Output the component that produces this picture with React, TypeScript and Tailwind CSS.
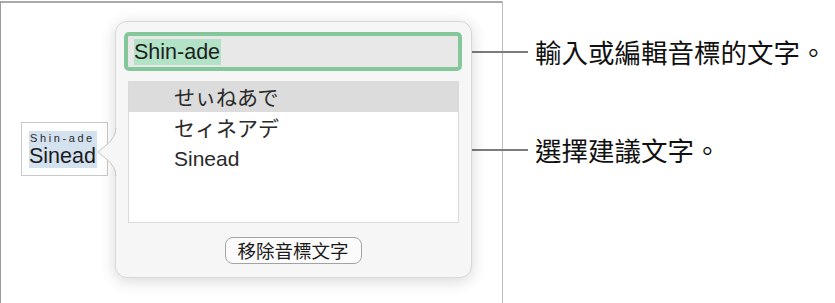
import React from "react";

const latin = { fontFamily: '"Liberation Sans", "Noto Sans CJK JP", sans-serif' };
const cjk = { fontFamily: '"Noto Sans CJK TC", "Liberation Sans", sans-serif' };
const jp = { fontFamily: '"Noto Sans CJK JP", "Liberation Sans", sans-serif' };

export default function App() {
  return (
    <div className="w-[835px] h-[303px] bg-white flex flex-row overflow-hidden">
      {/* Document frame */}
      <div className="w-[503px] shrink-0 mt-px h-[320px] border-t-2 border-l border-r border-t-[#a9a9a9] border-l-[#9a9a9a] border-r-[#bdbdbd] flex flex-row items-start pl-[20px]">
        {/* Ruby text box */}
        <div className="mt-[119px] w-[87px] h-[54px] border border-[#c9c9c9] bg-white pl-[7px] pt-[8px]">
          <div className="w-[68px] bg-[#d4e1ef] flex flex-col" style={latin}>
            <span className="text-[11px] leading-[12px] tracking-[2.6px] text-[#2a2a2a] pl-[1px] pt-px">Shin-ade</span>
            <span className="text-[21.5px] leading-[24px] text-[#1c1c1c]">Sinead</span>
          </div>
        </div>

        {/* Popover */}
        <div className="relative ml-[7px] mt-[18px] w-[357px] h-[257px] rounded-[12px] bg-[#f6f6f6] border border-[#d8d8d8] shadow-[0_3px_16px_rgba(0,0,0,0.16)] flex flex-col pl-[8px] pr-[9px] pt-[10px]">
          {/* arrow */}
          <svg className="absolute left-[-19px] top-[106px]" width="20" height="48" viewBox="0 0 20 48">
            <path d="M19.5 0 Q19 9 11 16 L1 24 L11 32 Q19 39 19.5 48 Z" fill="#f6f6f6" />
            <path d="M19 0 Q18.5 9 10.5 16 L0.8 24 L10.5 32 Q18.5 39 19 48" fill="none" stroke="#c9c9c9" strokeWidth="1" />
          </svg>

          {/* text field */}
          <div className="h-[39px] rounded-[5px] border-[4px] border-[#84c79b] bg-[#e8e8e8] flex items-center pl-[6px]">
            <span className="bg-[#b3e3c7] text-[21.5px] leading-[26px] text-[#1f1f1f] pr-[1px]" style={latin}>Shin-ade</span>
          </div>

          {/* suggestion list */}
          <div className="mt-[10px] ml-[4px] mr-[3px] h-[142px] bg-white border border-[#dadada] flex flex-col">
            <div className="h-[30px] bg-[#dcdcdc] flex items-center pl-[45px] text-[21px] text-[#2a2a2a]" style={jp}>せぃねあで</div>
            <div className="h-[31px] flex items-center pl-[45px] text-[21px] text-[#2a2a2a]" style={jp}>セィネアデ</div>
            <div className="h-[31px] flex items-center pl-[45px] text-[21px] text-[#2a2a2a]" style={latin}>Sinead</div>
          </div>

          {/* button */}
          <div className="mt-[14px] flex justify-center">
            <div className="w-[137px] h-[27px] rounded-[8px] border border-[#a3a3a3] bg-[#fbfbfb] flex items-center justify-center text-[18.5px] text-[#1a1a1a] leading-none" style={cjk}>
              移除音標文字
            </div>
          </div>
        </div>
      </div>

      {/* Callout labels */}
      <div className="flex flex-col pt-[33px]" style={cjk}>
        <div className="flex flex-row items-center h-[38px]">
          <div className="-ml-[40px] w-[65px] h-[2px] bg-[#7c7c7c]" />
          <span className="ml-[7px] text-[26.5px] leading-[38px] text-[#111] whitespace-nowrap">輸入或編輯音標的文字。</span>
        </div>
        <div className="flex flex-row items-center h-[38px] mt-[60px]">
          <div className="-ml-[43px] w-[68px] h-[2px] bg-[#7c7c7c]" />
          <span className="ml-[7px] text-[26.5px] leading-[38px] text-[#111] whitespace-nowrap">選擇建議文字。</span>
        </div>
      </div>
    </div>
  );
}
